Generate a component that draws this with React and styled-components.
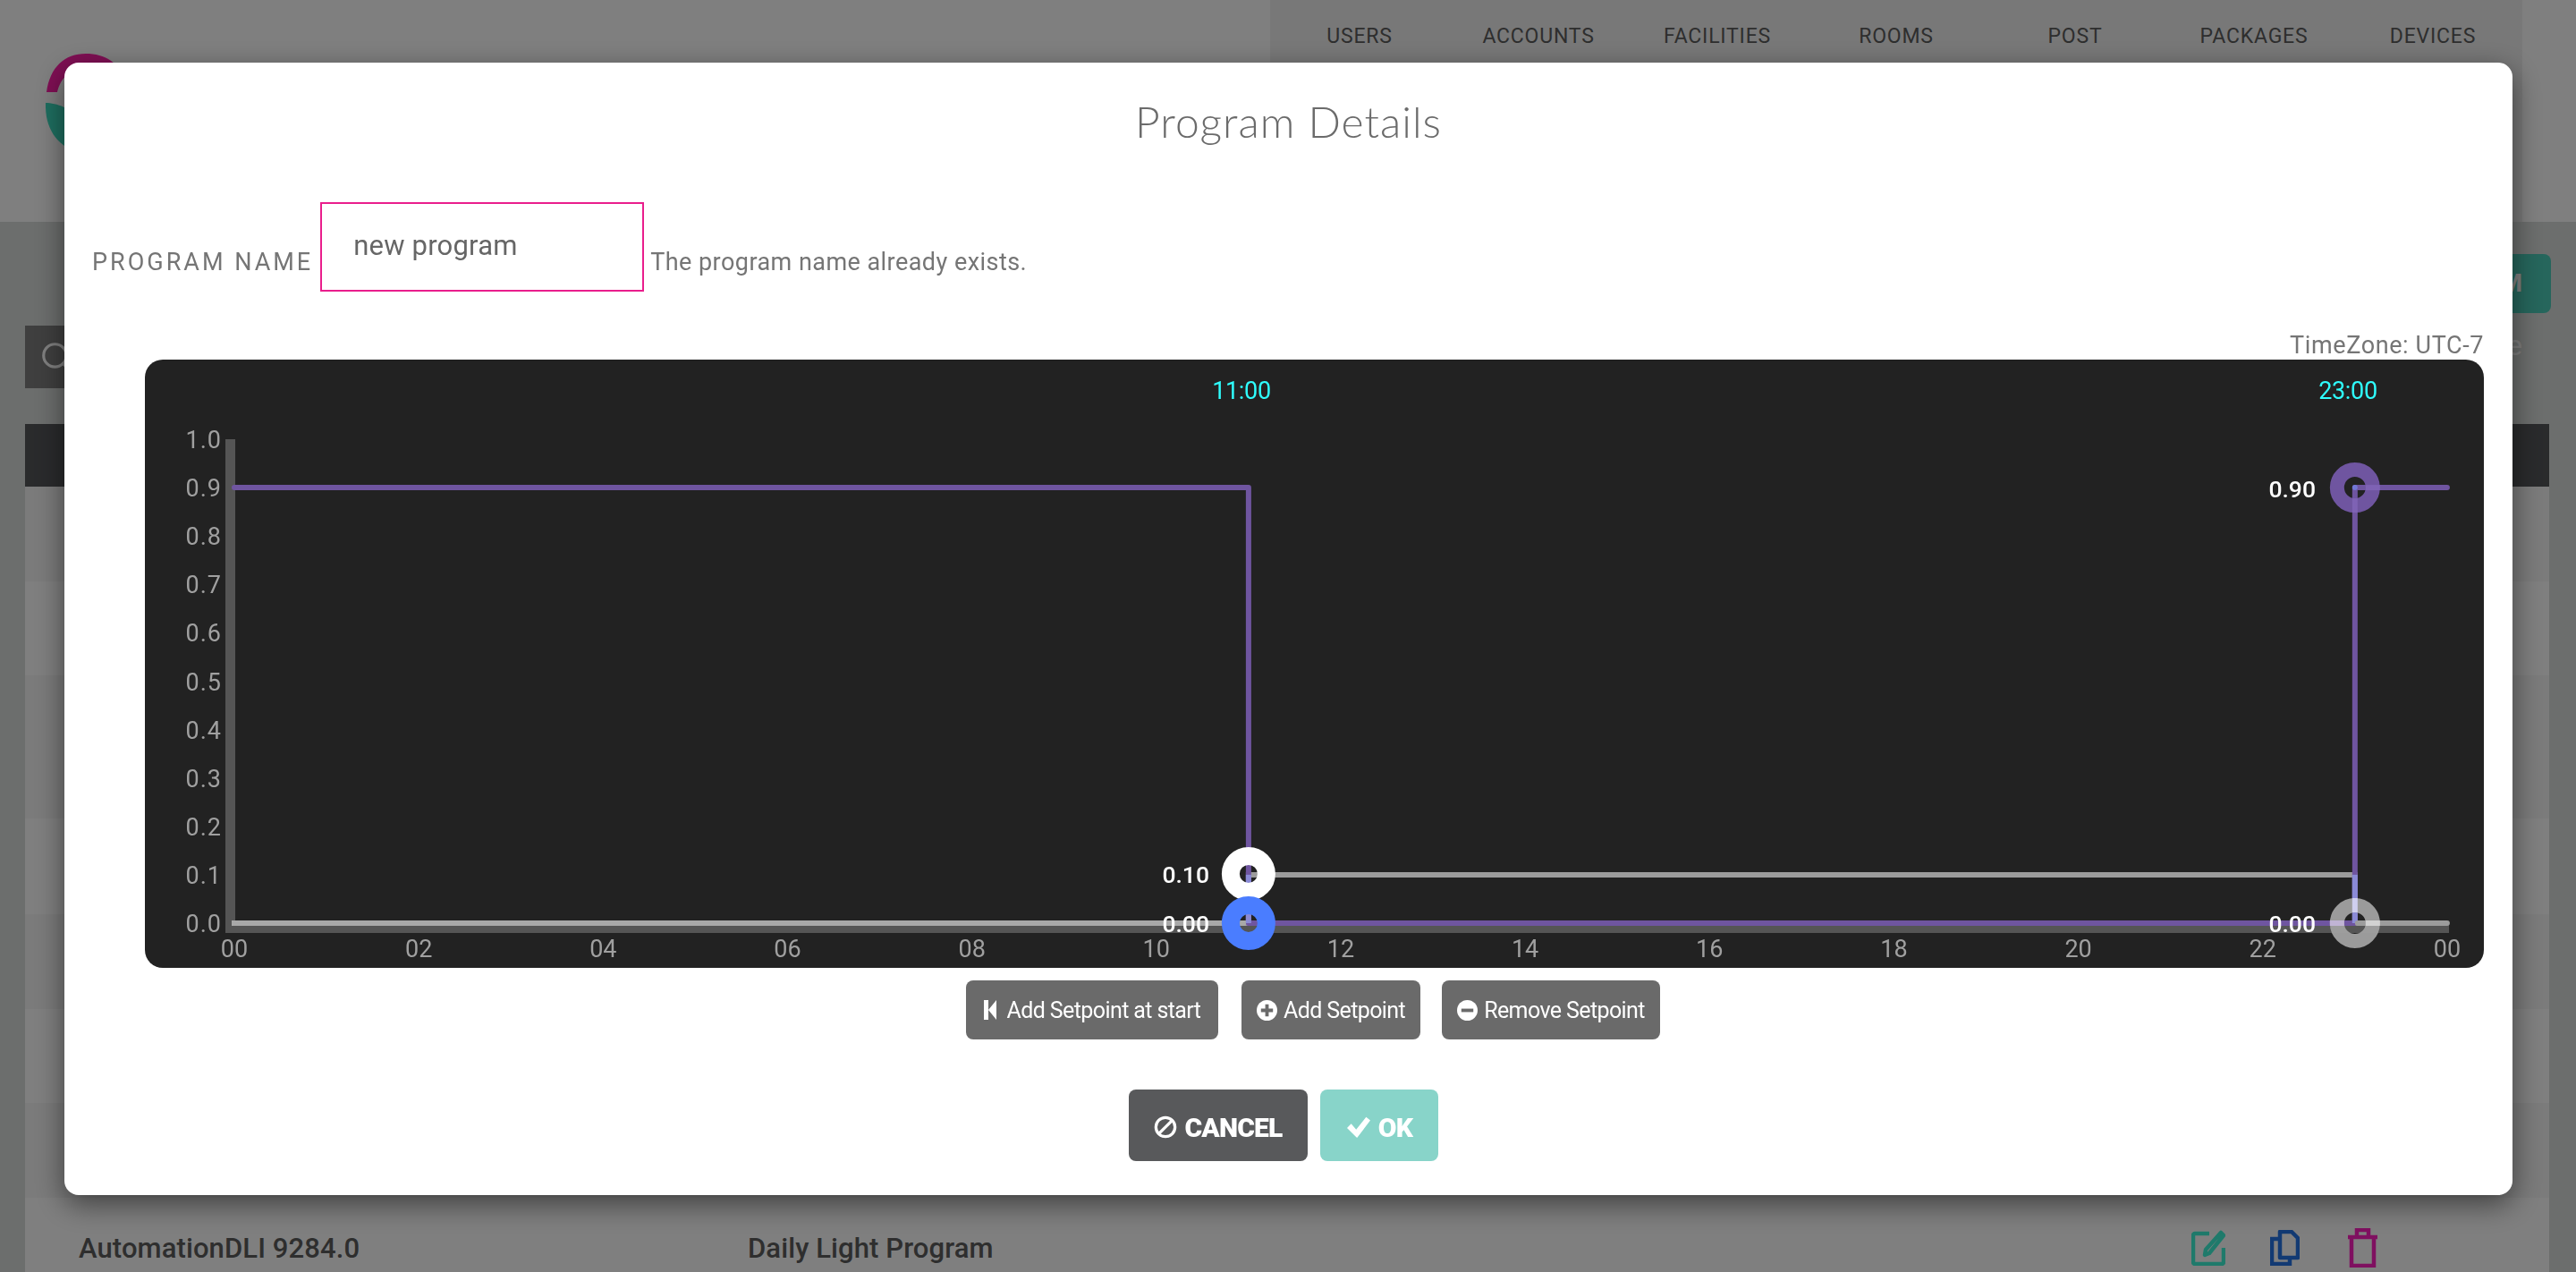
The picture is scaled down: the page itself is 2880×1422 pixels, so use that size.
import React from 'react';
import styled, { createGlobalStyle } from 'styled-components';
import { Search } from 'lucide-react';

const GlobalStyle = createGlobalStyle`
  html, body {
    margin: 0;
    padding: 0;
    height: 100%;
    overflow: hidden;
    background: #d8dcda;
    font-family: Roboto, "Liberation Sans", sans-serif;
  }
`;

const NAV_ITEMS = ['USERS', 'ACCOUNTS', 'FACILITIES', 'ROOMS', 'POST', 'PACKAGES', 'DEVICES'];
const ROWS = [106, 105, 160, 107, 106, 105, 106, 106];

const HOUR = 103.08;
const X0 = 100; // x of hour 0 inside the chart
const Y0 = 630; // y of value 0 inside the chart
const UNIT = 541;
const px = (h) => X0 + h * HOUR;
const py = (v) => Y0 - v * UNIT;

const PURPLE = '#6f55a0';
const GREY = '#9c9c9c';

const Page = styled.div`
  display: flex;
  flex-direction: column;
  height: 1422px;
  overflow: hidden;
  background: #d8dcda;
`;

const Header = styled.header`
  display: flex;
  justify-content: space-between;
  height: 248px;
  flex: none;
  padding-right: 60px;
  padding-left: 50px;
  background: #ffffff;
`;

const Logo = styled.svg`
  margin-top: 60px;
  width: 100px;
  height: 110px;
`;

const Nav = styled.nav`
  display: flex;
  width: 1400px;
  background: #f0f0f0;
`;

const NavItem = styled.a`
  flex: 1;
  padding-top: 28px;
  font-size: 23px;
  line-height: 26px;
  letter-spacing: 0.8px;
  text-align: center;
  color: #5c5c5c;
`;

const Toolbar = styled.div`
  display: flex;
  justify-content: space-between;
  height: 226px;
  flex: none;
  box-sizing: border-box;
  padding: 36px 28px 0 28px;
`;

const SearchBox = styled.div`
  display: flex;
  align-items: center;
  width: 500px;
  height: 70px;
  margin-top: 80px;
  padding-left: 16px;
  box-sizing: border-box;
  background: #7e7e7e;
  color: #ffffff;
`;

const ToolbarRight = styled.div`
  display: flex;
  flex-direction: column;
  align-items: flex-end;
`;

const AddButton = styled.div`
  width: 300px;
  height: 66px;
  padding-right: 32px;
  box-sizing: border-box;
  border-radius: 8px;
  background: #4cccb8;
  color: #ffffff;
  font-size: 28px;
  font-weight: 700;
  line-height: 66px;
  text-align: right;
`;

const ArchiveLabel = styled.div`
  margin-top: 18px;
  padding-right: 32px;
  font-size: 32px;
  line-height: 36px;
  color: #ffffff;
`;

const Table = styled.div`
  margin: 0 30px 0 28px;
`;

const TableHead = styled.div`
  height: 70px;
  background: #545659;
`;

const Row = styled.div`
  display: grid;
  grid-template-columns: 748px 1614px 1fr;
  align-items: center;
  height: ${(p) => p.$height}px;
  padding: 6px 0 0 60px;
  box-sizing: border-box;
  background: ${(p) => (p.$odd ? '#ffffff' : '#f6f6f6')};
  font-size: 31px;
  font-weight: 500;
  letter-spacing: 0.1px;
  color: #5c5c5c;
`;

const RowIcons = styled.div`
  display: flex;
  align-items: center;
  gap: 50px;
`;

const Backdrop = styled.div`
  position: fixed;
  inset: 0;
  box-sizing: border-box;
  display: flex;
  padding: 70px 71px 86px 72px;
  background: rgba(0, 0, 0, 0.5);
`;

const Modal = styled.div`
  flex: 1;
  display: flex;
  flex-direction: column;
  border-radius: 16px;
  background: #ffffff;
  box-shadow: 0 10px 32px rgba(0, 0, 0, 0.5);
`;

const Title = styled.h2`
  margin: 0;
  padding-top: 38px;
  font-family: Lato, sans-serif;
  font-size: 48px;
  font-weight: 300;
  line-height: 56px;
  letter-spacing: 1px;
  text-align: center;
  color: #6b6b6b;
`;

const NameRow = styled.div`
  display: flex;
  align-items: center;
  margin-top: 62px;
  padding-left: 31px;
  color: #757575;
`;

const NameLabel = styled.label`
  margin: 34px 8px 0 0;
  font-size: 27px;
  letter-spacing: 3px;
`;

const NameInput = styled.div`
  width: 362px;
  height: 100px;
  box-sizing: border-box;
  padding: 26px 0 0 35px;
  border: 2px solid #e91e8c;
  font-size: 31px;
  line-height: 42px;
  letter-spacing: 0.2px;
  color: #666666;
`;

const NameError = styled.span`
  margin: 34px 0 0 7px;
  font-size: 27px;
  letter-spacing: 0.45px;
`;

const TimeZone = styled.div`
  margin-top: 44px;
  padding-right: 32px;
  font-size: 27px;
  line-height: 32px;
  letter-spacing: 0.6px;
  text-align: right;
  color: #757575;
`;

const ChartPanel = styled.div`
  height: 680px;
  margin: 0 32px 0 90px;
  border-radius: 20px;
  overflow: hidden;
  background: #222222;
`;

const ChartSvg = styled.svg`
  display: block;
  width: 100%;
  height: 100%;
  font-family: Roboto, sans-serif;
`;

const SetpointActions = styled.div`
  display: flex;
  margin: 14px 0 0 1008px;
`;

const SetpointButton = styled.button`
  display: flex;
  align-items: center;
  justify-content: center;
  gap: ${(p) => p.$iconGap}px;
  width: ${(p) => p.$width}px;
  height: 66px;
  margin-right: ${(p) => p.$gap}px;
  padding: 0;
  border: 0;
  border-radius: 8px;
  background: #6a6a6a;
  color: #ffffff;
  font-family: Roboto, sans-serif;
  font-size: 25px;
  letter-spacing: -0.6px;
`;

const Footer = styled.div`
  display: flex;
  gap: 14px;
  margin: 56px 0 0 1190px;
`;

const FooterButton = styled.button`
  display: flex;
  align-items: center;
  justify-content: center;
  gap: 8px;
  width: ${(p) => p.$width}px;
  height: 80px;
  padding: 4px 0 0;
  border: 0;
  border-radius: 8px;
  background: ${(p) => p.$bg};
  color: #ffffff;
  font-family: Roboto, sans-serif;
  font-size: 30px;
  font-weight: 900;
  letter-spacing: -0.8px;
`;

function EditIcon() {
  return (
    <svg width="38" height="40" viewBox="0 0 38 40" fill="none" stroke="#3ef4d6" strokeWidth="4.5">
      <path d="M20 4H4a2 2 0 0 0-2 2v30a2 2 0 0 0 2 2h30a2 2 0 0 0 2-2V20" />
      <path d="M33 3l3 3-16 20-5 2 1-6z" strokeLinejoin="round" />
    </svg>
  );
}

function CopyIcon() {
  return (
    <svg width="33" height="40" viewBox="0 0 33 40" fill="none" stroke="#2474e6" strokeWidth="4.5">
      <path d="M12 2h12l7 7v22H11V2z" strokeLinejoin="round" />
      <path d="M11 10H2v28h20v-7" />
    </svg>
  );
}

function TrashIcon() {
  return (
    <svg width="37" height="44" viewBox="-4 0 37 44" fill="none" stroke="#ff20c0" strokeWidth="4.5">
      <path d="M0 10h33" />
      <path d="M10 10V2h13v8" />
      <path d="M4 10v32h25V10" />
    </svg>
  );
}

function Ring({ x, y, r, width, color, opacity }) {
  return <circle cx={x} cy={y} r={r} fill="none" stroke={color} strokeWidth={width} opacity={opacity} />;
}

function Chart() {
  const hours = Array.from({ length: 12 }, (_, i) => i * 2);
  const values = Array.from({ length: 11 }, (_, i) => i / 10);

  return (
    <ChartSvg viewBox="0 0 2615 680" fontSize="27">
      <rect x="90" y="89" width="11" height="542" fill="#555555" />
      <rect x={X0 - 10} y={Y0 - 1} width="2486" height="12" fill="#555555" />

      {values.map((v) => (
        <text key={v} x="86" y={py(v) + 10} letterSpacing="1" fill="#a0a0a0" textAnchor="end">
          {v.toFixed(1)}
        </text>
      ))}
      {hours.map((h) => (
        <text key={h} x={px(h)} y={668} fill="#a0a0a0" textAnchor="middle">
          {String(h).padStart(2, '0')}
        </text>
      ))}
      <text x={px(24)} y={668} fill="#a0a0a0" textAnchor="middle">00</text>

      <text x="1226" y="44" letterSpacing="-0.3" fill="#2ffdfd" textAnchor="middle">11:00</text>
      <text x="2463" y="44" letterSpacing="-0.3" fill="#2ffdfd" textAnchor="middle">23:00</text>

      <polyline
        points={`${px(0)},${py(0)} ${px(11)},${py(0)} ${px(11)},${py(0.1)} ${px(23)},${py(0.1)} ${px(23)},${py(0)} ${px(24)},${py(0)}`}
        fill="none"
        stroke={GREY}
        strokeWidth="6"
        strokeLinecap="round"
      />
      <polyline
        points={`${px(0)},${py(0.9)} ${px(11)},${py(0.9)} ${px(11)},${py(0)} ${px(23)},${py(0)} ${px(23)},${py(0.9)} ${px(24)},${py(0.9)}`}
        fill="none"
        stroke={PURPLE}
        strokeWidth="6"
        strokeLinecap="round"
        strokeLinejoin="round"
      />
      <rect x={px(0) - 3} y={py(0) - 3} width={px(11) - px(0)} height="6" fill="#a8a8a8" />
      <rect x={px(11) - 3} y={py(0.1)} width="6" height={py(0) - py(0.1)} fill="#8a8ad6" />
      <rect x={px(23) - 3} y={py(0.1)} width="6" height={py(0) - py(0.1)} fill="#8a8ad6" />
      <rect x={px(23)} y={py(0) - 3} width={px(24) - px(23)} height="6" rx="3" fill={GREY} />

      <Ring x={px(23)} y={py(0)} r={20} width={16} color="#a0a0a0" opacity={0.96} />
      <rect x={px(23) + 12} y={py(0) - 3} width="16" height="6" fill="#d2d2d2" />
      <rect x={px(23) - 28} y={py(0) - 3} width="16" height="6" fill="#c0b4d4" />
      <rect x={px(23) - 3} y={py(0) - 28} width="6" height="16" fill="#cfcfef" />

      <Ring x={px(23)} y={py(0.9)} r={20} width={16} color={PURPLE} opacity={1} />
      <rect x={px(23) + 12} y={py(0.9) - 3} width="16" height="6" fill="#7e62b4" />
      <rect x={px(23) - 3} y={py(0.9) + 12} width="6" height="16" fill="#7e62b4" />
      <circle cx={px(23)} cy={py(0.9)} r="3" fill="#7278d6" />

      <Ring x={px(11)} y={py(0.1) - 1} r={20} width={20} color="#ffffff" />
      <Ring x={px(11)} y={py(0)} r={20} width={20} color="#4a7dff" />

      <text x="1190" y="585" fontSize="26.5" fontWeight="500" fill="#ffffff" textAnchor="end">0.10</text>
      <text x="1190" y="640" fontSize="26.5" fontWeight="500" fill="#ffffff" textAnchor="end">0.00</text>
      <text x="2427" y="154" fontSize="26.5" fontWeight="500" fill="#ffffff" textAnchor="end">0.90</text>
      <text x="2427" y="640" fontSize="26.5" fontWeight="500" fill="#ffffff" textAnchor="end">0.00</text>
    </ChartSvg>
  );
}

export default function App() {
  return (
    <>
      <GlobalStyle />
      <Page>
        <Header>
          <Logo viewBox="0 0 100 110">
            <path d="M2 43C6 15 22 0 46 0c22 0 36 10 46 30L80 40C70 22 60 16 46 16 30 16 18 26 14 43z" fill="#ff1fa8" />
            <path d="M1 55c12 0 30 6 36 20 4 12 2 26-2 35C14 102 0 84 1 55z" fill="#3ddcbf" />
          </Logo>
          <Nav>
            {NAV_ITEMS.map((item) => (
              <NavItem key={item}>{item}</NavItem>
            ))}
          </Nav>
        </Header>
        <Toolbar>
          <SearchBox>
            <Search size={38} color="#ffffff" strokeWidth={2} />
          </SearchBox>
          <ToolbarRight>
            <AddButton>ADD PROGRAM</AddButton>
            <ArchiveLabel>Archive</ArchiveLabel>
          </ToolbarRight>
        </Toolbar>
        <Table>
          <TableHead />
          {ROWS.map((height, i) => (
            <Row key={i} $height={height} $odd={i % 2 === 1}>
              {i === ROWS.length - 1 && (
                <>
                  <span>AutomationDLI 9284.0</span>
                  <span>Daily Light Program</span>
                  <RowIcons>
                    <EditIcon />
                    <CopyIcon />
                    <TrashIcon />
                  </RowIcons>
                </>
              )}
            </Row>
          ))}
        </Table>
      </Page>
      <Backdrop>
        <Modal>
          <Title>Program Details</Title>
          <NameRow>
            <NameLabel>PROGRAM NAME</NameLabel>
            <NameInput>new program</NameInput>
            <NameError>The program name already exists.</NameError>
          </NameRow>
          <TimeZone>TimeZone: UTC-7</TimeZone>
          <ChartPanel>
            <Chart />
          </ChartPanel>
          <SetpointActions>
            <SetpointButton $width={282} $gap={26} $iconGap={12}>
              <svg width="14" height="22" viewBox="0 0 14 22" fill="#fff"><path d="M0 0h5v22H0zM14 0v22L5 11z" /></svg>
              Add Setpoint at start
            </SetpointButton>
            <SetpointButton $width={200} $gap={24} $iconGap={7}>
              <svg width="23" height="23" viewBox="0 0 24 24"><circle cx="12" cy="12" r="12" fill="#fff" /><path d="M5 10h5V5h4v5h5v4h-5v5h-4v-5H5z" fill="#6a6a6a" /></svg>
              Add Setpoint
            </SetpointButton>
            <SetpointButton $width={244} $gap={0} $iconGap={7}>
              <svg width="23" height="23" viewBox="0 0 24 24"><circle cx="12" cy="12" r="12" fill="#fff" /><path d="M5 10h14v4H5z" fill="#6a6a6a" /></svg>
              Remove Setpoint
            </SetpointButton>
          </SetpointActions>
          <Footer>
            <FooterButton $width={200} $bg="#58595b">
              <svg width="26" height="26" viewBox="0 0 28 28" fill="none" stroke="#fff" strokeWidth="3.5"><circle cx="14" cy="14" r="11.5" /><path d="M6 22L22 6" /></svg>
              CANCEL
            </FooterButton>
            <FooterButton $width={132} $bg="#88d4c9">
              <svg width="28" height="26" viewBox="0 0 28 28" fill="#fff"><path d="M0 15l5-5 6 7L23 2l5 4-16 21z" /></svg>
              OK
            </FooterButton>
          </Footer>
        </Modal>
      </Backdrop>
    </>
  );
}
